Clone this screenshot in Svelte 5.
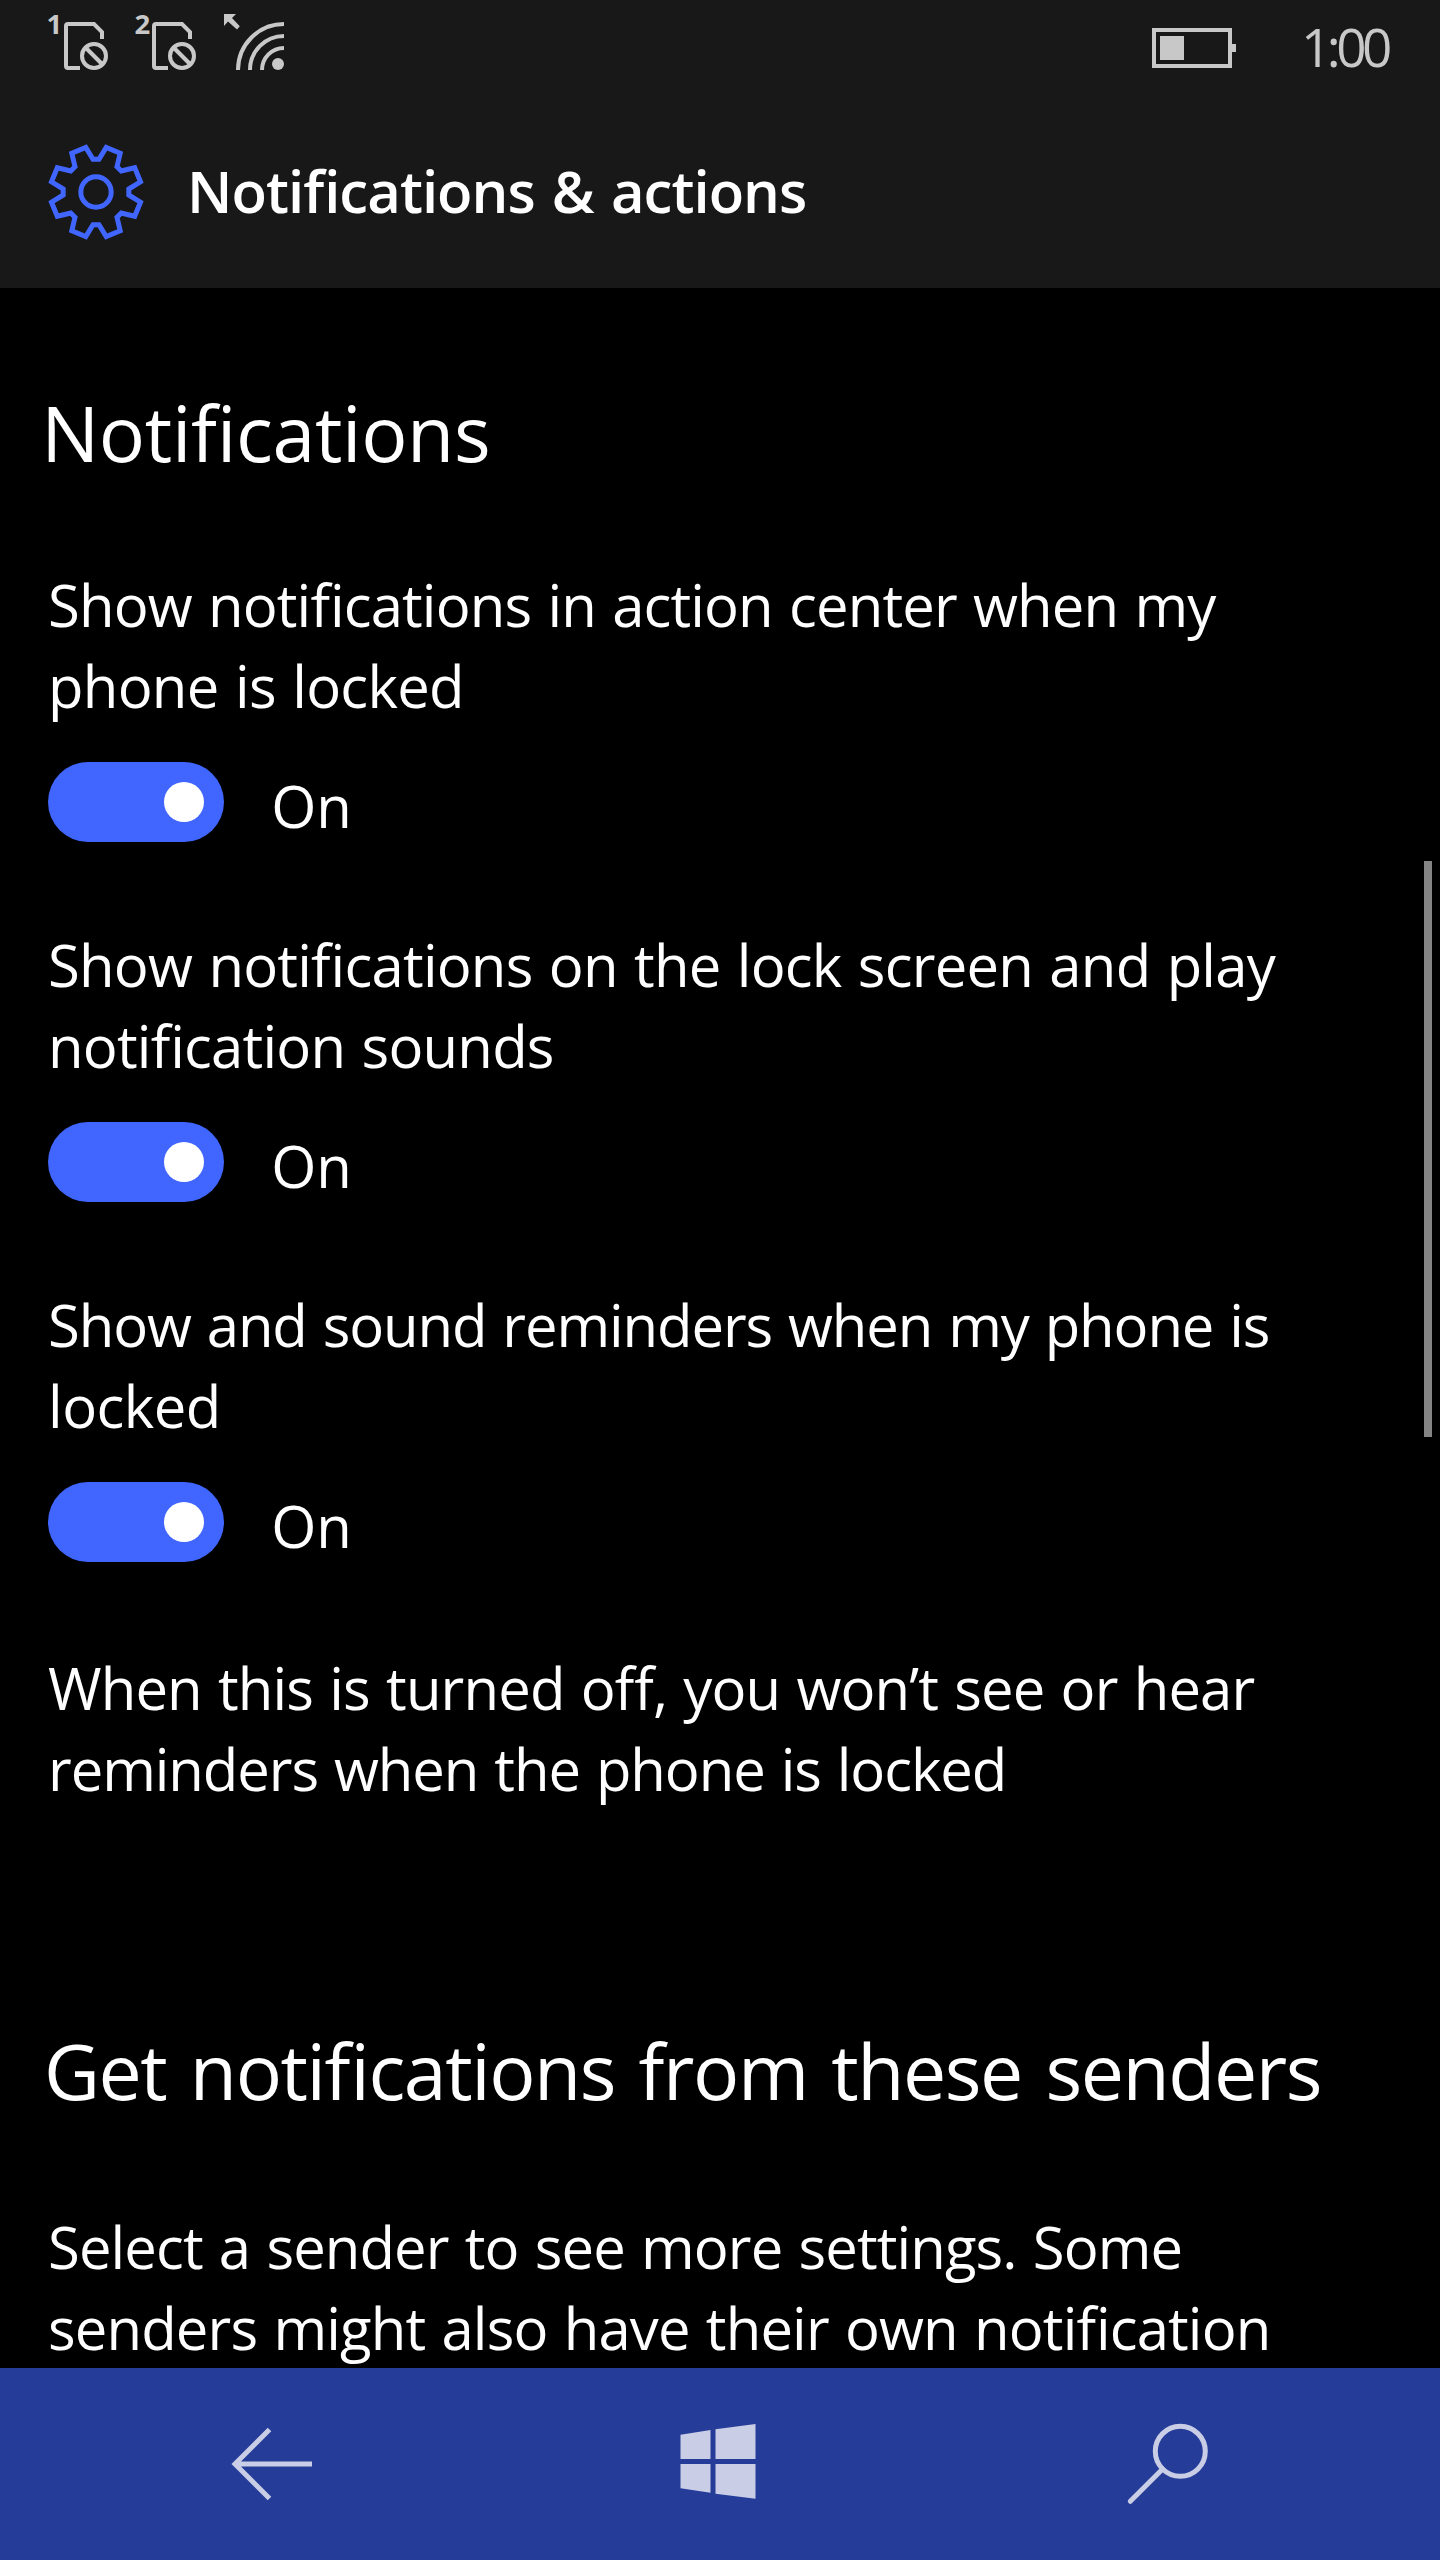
<script>
  const intro = 'Notifications';
  const toggles = [
    {
      lines: [
        { text: 'Show notifications in action center when my', track: -0.85 },
        { text: 'phone is locked', track: -0.7 }
      ]
    },
    {
      lines: [
        { text: 'Show notifications on the lock screen and play', track: -0.77 },
        { text: 'notification sounds', track: -0.77 }
      ]
    },
    {
      lines: [
        { text: 'Show and sound reminders when my phone is', track: -1.1 },
        { text: 'locked', track: -0.5 }
      ]
    }
  ];
  const note = [
    { text: 'When this is turned off, you won’t see or hear', track: -0.86 },
    { text: 'reminders when the phone is locked', track: -1.07 }
  ];
  const senders = [
    { text: 'Select a sender to see more settings. Some', track: -0.89 },
    { text: 'senders might also have their own notification', track: -0.85 }
  ];
  let states = $state([true, true, true]);
</script>

{#snippet copy(lines)}
  {#each lines as line}
    <span class="line" style="letter-spacing: {line.track}px">{line.text}</span>
  {/each}
{/snippet}

{#snippet sim(label)}
  <svg class="sim" width="64" height="72" viewBox="44 2 64 72">
    <text class="sim-label" x="46.6" y="33.8">{label}</text>
    <path d="M102 39V32L94 24H68Q66 24 66 26V66Q66 68 68 68H80" />
    <circle cx="94" cy="56" r="12" />
    <path d="M85.5 47.5L102.5 64.5" />
  </svg>
{/snippet}

<div class="phone">
  <header>
    <div class="status">
      <div class="signals">
        {@render sim('1')}
        {@render sim('2')}
        <svg class="wifi" width="64" height="72" viewBox="220 2 64 72">
          <path class="solid" d="M224 14H236L232 18L239.8 26.2L237 29.4L228 21.5L224 26Z" />
          <path d="M238 70A46 46 0 0 1 284 24M250 70A34 34 0 0 1 284 36M262 70A22 22 0 0 1 284 48" />
          <circle class="solid" cx="278" cy="64" r="6" />
        </svg>
      </div>
      <div class="right">
        <svg class="battery" width="84" height="40" viewBox="0 0 84 40">
          <path d="M2 2H78V38H2Z" />
          <path class="solid" d="M8 8H32V32H8ZM80 16H84V24H80Z" />
        </svg>
        <span class="time">1:00</span>
      </div>
    </div>
    <div class="title">
      <svg class="gear" width="100" height="100" viewBox="-50 -50 100 100">
        <path
          d="M-3-32.8H3L10.2-44.5L24.2-38.7L21-25.3L25.3-21L38.7-24.2L44.5-10.2L32.8-3V3L44.5 10.2L38.7 24.2L25.3 21L21 25.3L24.2 38.7L10.2 44.5L3 32.8H-3L-10.2 44.5L-24.2 38.7L-21 25.3L-25.3 21L-38.7 24.2L-44.5 10.2L-32.8 3V-3L-44.5-10.2L-38.7-24.2L-25.3-21L-21-25.3L-24.2-38.7L-10.2-44.5Z"
        />
        <circle r="15.2" />
      </svg>
      <h1>Notifications &amp; actions</h1>
    </div>
  </header>

  <main>
    <h2 class="first">{intro}</h2>
    {#each toggles as item, i}
      <section>
        <p>{@render copy(item.lines)}</p>
        <div class="row">
          <button
            class="switch"
            class:on={states[i]}
            aria-label={item.lines.map((l) => l.text).join(' ')}
            onclick={() => (states[i] = !states[i])}
          >
            <span class="knob"></span>
          </button>
          <span class="state">{states[i] ? 'On' : 'Off'}</span>
        </div>
      </section>
    {/each}
    <p class="note">{@render copy(note)}</p>
    <h2 class="second">Get notifications from these senders</h2>
    <p>{@render copy(senders)}</p>
    <div class="scrollbar"></div>
  </main>

  <nav>
    <svg width="100" height="100" viewBox="222 2414 100 100">
      <path d="M312 2464H235M269.5 2429.5L235 2464L269.5 2498.5" />
    </svg>
    <svg width="100" height="100" viewBox="668.5 2414 100 100">
      <path
        class="solid"
        d="M680 2434.7L710 2430V2459H680ZM715 2429.3L755 2424V2459H715ZM680 2464H710V2492.7L680 2488.3ZM715 2464H755V2498.8L715 2493.7Z"
      />
    </svg>
    <svg width="100" height="100" viewBox="1115 2414 100 100">
      <circle cx="1180.3" cy="2451.3" r="25" />
      <path stroke-linecap="round" d="M1162.6 2469L1130.3 2501.3" />
    </svg>
  </nav>
</div>

<style>
  :global(body) {
    background: #000;
  }
  .phone {
    width: 1440px;
    height: 2560px;
    display: flex;
    flex-direction: column;
    overflow: hidden;
    background: #000;
    color: #fff;
    font-family: 'Open Sans', 'Noto Sans', sans-serif;
    font-feature-settings: 'liga' 1;
  }
  svg {
    display: block;
    fill: none;
    stroke-width: 4;
    flex: none;
    overflow: visible;
  }
  header {
    height: 288px;
    flex: none;
    background: #181818;
  }
  .status {
    height: 96px;
    display: flex;
    justify-content: space-between;
    align-items: flex-start;
  }
  .signals {
    display: flex;
    gap: 24px;
    padding: 2px 0 0 44px;
  }
  .status svg {
    stroke: #c8c8c8;
  }
  .status .solid,
  .sim-label {
    fill: #c8c8c8;
    stroke: none;
  }
  .sim-label {
    font-size: 27.5px;
    font-weight: 700;
  }
  .right {
    display: flex;
    padding-right: 43px;
  }
  .battery {
    margin-top: 28px;
  }
  .time {
    width: 96px;
    margin-left: 65px;
    font-size: 53px;
    line-height: 94px;
    letter-spacing: -4.5px;
    white-space: nowrap;
    color: #c8c8c8;
  }
  .title {
    height: 192px;
    display: flex;
    align-items: flex-start;
    padding-left: 46px;
  }
  .gear {
    margin-top: 46px;
    stroke: #4166ff;
    stroke-width: 5;
  }
  h1 {
    margin: 55px 0 0 41px;
    font-size: 58px;
    font-weight: 600;
    line-height: 80px;
    letter-spacing: -0.95px;
    word-spacing: 3px;
    white-space: nowrap;
  }
  main {
    position: relative;
    flex: 1;
    min-height: 0;
    overflow: hidden;
    padding: 95px 0 0 48px;
  }
  h2 {
    margin: 0;
    font-size: 77px;
    font-weight: 400;
    line-height: 100px;
    white-space: nowrap;
  }
  .first {
    margin: 0 0 82px -6.8px;
    letter-spacing: -0.35px;
  }
  .second {
    margin: 212px 0 86px -4px;
    letter-spacing: -1.45px;
    word-spacing: 5px;
  }
  p {
    margin: 0;
    font-size: 58px;
    line-height: 80.5px;
    word-spacing: 2px;
  }
  .line {
    display: block;
    white-space: nowrap;
  }
  section {
    margin-bottom: 83px;
  }
  .row {
    display: flex;
    height: 80px;
    margin-top: 36px;
    gap: 47.2px;
  }
  .switch {
    display: flex;
    align-items: center;
    width: 176px;
    height: 80px;
    margin: 0;
    padding: 0 20px;
    border: 0;
    border-radius: 40px;
    background: #555;
  }
  .switch.on {
    justify-content: flex-end;
    background: #4066ff;
  }
  .knob {
    width: 40px;
    height: 40px;
    border-radius: 50%;
    background: #fff;
  }
  .state {
    margin-top: 4px;
    font-size: 58px;
    line-height: 80px;
  }
  .note {
    margin-top: 86px;
  }
  .scrollbar {
    position: absolute;
    top: 573px;
    right: 8px;
    width: 8px;
    height: 576px;
    background: #848484;
  }
  nav {
    flex: none;
    height: 192px;
    display: flex;
    align-items: center;
    justify-content: space-between;
    padding: 0 225px 0 222px;
    box-sizing: border-box;
    background: #253c99;
  }
  nav svg {
    stroke: #c9cee6;
    stroke-width: 5;
  }
  nav .solid {
    fill: #c9cee6;
    stroke: none;
  }
</style>
